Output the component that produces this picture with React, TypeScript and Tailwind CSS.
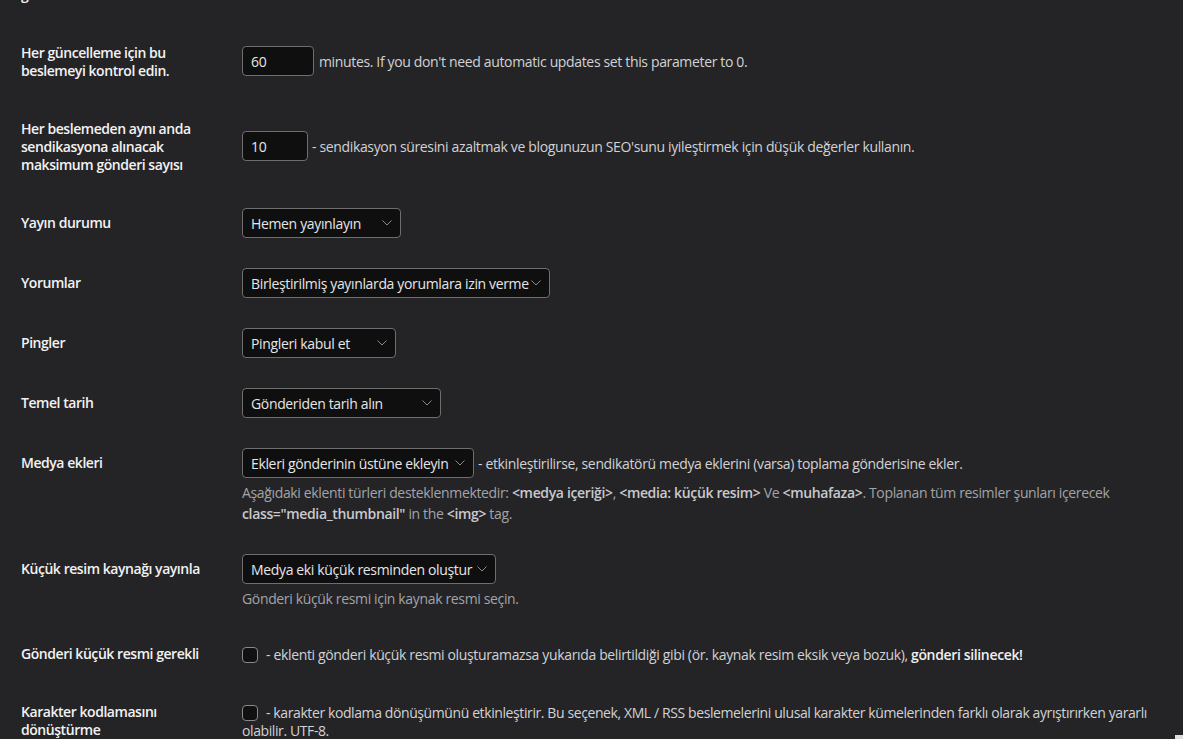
import React from "react";

const Chevron = () => (
  <svg width="10" height="6" viewBox="0 0 10 6" className="shrink-0">
    <path d="M0.5 0.5 L5 5 L9.5 0.5" fill="none" stroke="#8a8a8a" strokeWidth="1" />
  </svg>
);

function Select({ w, text }: { w: string; text: string }) {
  return (
    <div
      className={`flex h-[30px] shrink-0 items-center justify-between rounded-[4px] border border-[#6e6e6e] bg-[#0f0f10] pl-[8px] pr-[8px] text-[#e6e6e6] ${w}`}
    >
      <span className="whitespace-nowrap">{text}</span>
      <Chevron />
    </div>
  );
}

function Input({ w, value }: { w: string; value: string }) {
  return (
    <div
      className={`flex h-[30px] shrink-0 items-center rounded-[4px] border border-[#6e6e6e] bg-[#0f0f10] pl-[8px] text-[#e6e6e6] ${w}`}
    >
      {value}
    </div>
  );
}

const Checkbox = () => (
  <span className="mr-[8px] inline-block h-[16px] w-[16px] translate-y-[3px] rounded-[4px] border border-[#8a8a8a] bg-[#111112] align-baseline" />
);

function Label({ children }: { children: React.ReactNode }) {
  return (
    <div className="w-[221px] shrink-0 pb-[19px] pr-[21px] pt-[21px] text-[14px] font-semibold leading-[18px] tracking-[-0.45px] text-[#f2f2f2]">
      {children}
    </div>
  );
}

export default function App() {
  return (
    <div
      className="relative h-[739px] overflow-hidden bg-[#242427] pl-[21px] pr-[30px] text-[14px] tracking-[-0.35px] text-[#d2d2d4]"
      style={{ fontFamily: '"Segoe UI", "Open Sans", "Noto Sans", sans-serif' }}
    >
      {/* previous row (clipped) */}
      <div className="flex h-[23px] flex-col justify-end overflow-hidden pb-[19px]">
        <div className="text-[14px] font-semibold leading-[18px] text-[#f2f2f2]">gönderi</div>
      </div>

      {/* Row 1 */}
      <div className="flex items-center">
        <Label>
          Her güncelleme için bu
          <br />
          beslemeyi kontrol edin.
        </Label>
        <div className="flex items-center gap-[5px]">
          <Input w="w-[72px]" value="60" />
          <span className="whitespace-nowrap">minutes. If you don't need automatic updates set this parameter to 0.</span>
        </div>
      </div>

      {/* Row 2 */}
      <div className="flex items-center">
        <Label>
          Her beslemeden aynı anda
          <br />
          sendikasyona alınacak
          <br />
          maksimum gönderi sayısı
        </Label>
        <div className="flex items-center gap-[4px]">
          <Input w="w-[66px]" value="10" />
          <span className="whitespace-nowrap">
            - sendikasyon süresini azaltmak ve blogunuzun SEO'sunu iyileştirmek için düşük değerler kullanın.
          </span>
        </div>
      </div>

      {/* Row 3 */}
      <div className="flex items-start">
        <Label>Yayın durumu</Label>
        <div className="py-[15px]">
          <Select w="w-[159px]" text="Hemen yayınlayın" />
        </div>
      </div>

      {/* Row 4 */}
      <div className="flex items-start">
        <Label>Yorumlar</Label>
        <div className="py-[15px]">
          <Select w="w-[308px]" text="Birleştirilmiş yayınlarda yorumlara izin verme" />
        </div>
      </div>

      {/* Row 5 */}
      <div className="flex items-start">
        <Label>Pingler</Label>
        <div className="py-[15px]">
          <Select w="w-[154px]" text="Pingleri kabul et" />
        </div>
      </div>

      {/* Row 6 */}
      <div className="flex items-start">
        <Label>Temel tarih</Label>
        <div className="py-[15px]">
          <Select w="w-[199px]" text="Gönderiden tarih alın" />
        </div>
      </div>

      {/* Row 7 */}
      <div className="flex items-start">
        <Label>Medya ekleri</Label>
        <div className="py-[15px]">
          <div className="flex items-center gap-[4px]">
            <Select w="w-[232px]" text="Ekleri gönderinin üstüne ekleyin" />
            <span className="whitespace-nowrap">
              - etkinleştirilirse, sendikatörü medya eklerini (varsa) toplama gönderisine ekler.
            </span>
          </div>
          <p className="mt-[4px] whitespace-nowrap leading-[21px] text-[#a3a3a6]">
            Aşağıdaki eklenti türleri desteklenmektedir:{" "}
            <b className="font-semibold text-[#c9c9cc]">&lt;medya içeriği&gt;</b>,{" "}
            <b className="font-semibold text-[#c9c9cc]">&lt;media: küçük resim&gt;</b> Ve{" "}
            <b className="font-semibold text-[#c9c9cc]">&lt;muhafaza&gt;</b>. Toplanan tüm resimler şunları içerecek
            <br />
            <b className="font-semibold text-[#c9c9cc]">class="media_thumbnail"</b> in the{" "}
            <b className="font-semibold text-[#c9c9cc]">&lt;img&gt;</b> tag.
          </p>
        </div>
      </div>

      {/* Row 8 */}
      <div className="flex items-start">
        <Label>Küçük resim kaynağı yayınla</Label>
        <div className="py-[15px]">
          <Select w="w-[254px]" text="Medya eki küçük resminden oluştur" />
          <p className="mt-[4px] whitespace-nowrap leading-[21px] text-[#a3a3a6]">
            Gönderi küçük resmi için kaynak resmi seçin.
          </p>
        </div>
      </div>

      {/* Row 9 */}
      <div className="flex items-start">
        <Label>Gönderi küçük resmi gerekli</Label>
        <div className="pt-[20px]">
          <p className="whitespace-nowrap leading-[18px]">
            <Checkbox />- eklenti gönderi küçük resmi oluşturamazsa yukarıda belirtildiği gibi (ör. kaynak resim eksik
            veya bozuk), <b className="font-semibold text-[#f0f0f0]">gönderi silinecek!</b>
          </p>
        </div>
      </div>

      {/* Row 10 */}
      <div className="flex items-start">
        <Label>
          Karakter kodlamasını
          <br />
          dönüştürme
        </Label>
        <div className="pt-[20px]">
          <p className="whitespace-nowrap leading-[18px] tracking-[-0.4px]">
            <Checkbox />- karakter kodlama dönüşümünü etkinleştirir. Bu seçenek, XML / RSS beslemelerini ulusal karakter
            kümelerinden farklı olarak ayrıştırırken yararlı
            <br />
            olabilir. UTF-8.
          </p>
        </div>
      </div>

      <div className="absolute bottom-0 right-0 h-[4px] w-[8px] bg-[#dedede]" />
    </div>
  );
}
